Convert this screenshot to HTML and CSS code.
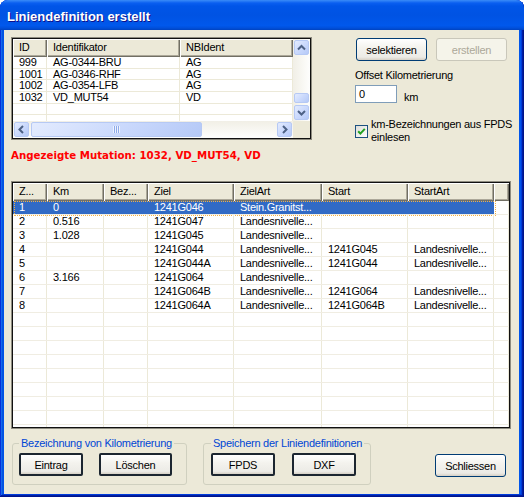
FILE: index.html
```html
<!DOCTYPE html>
<html>
<head>
<meta charset="utf-8">
<link rel="stylesheet" href="styles.css">
</head>
<body>
<div class="window">
  <div class="titlebar"><span class="title">Liniendefinition erstellt</span></div>
  <div class="client">
    <div class="top">
      <div class="frame top-list">
        <div class="frame-in">
          <div class="tl-main">
            <div class="tl-grid">
              <div class="tl-row head"><div class="h">ID</div><div class="h">Identifikator</div><div class="h">NBIdent</div></div>
              <div class="tl-row"><div class="c">999</div><div class="c">AG-0344-BRU</div><div class="c">AG</div></div>
              <div class="tl-row"><div class="c">1001</div><div class="c">AG-0346-RHF</div><div class="c">AG</div></div>
              <div class="tl-row"><div class="c">1002</div><div class="c">AG-0354-LFB</div><div class="c">AG</div></div>
              <div class="tl-row"><div class="c">1032</div><div class="c">VD_MUT54</div><div class="c">VD</div></div>
              <div class="tl-row"><div class="c"></div><div class="c"></div><div class="c"></div></div>
              <div class="tl-row"><div class="c"></div><div class="c"></div><div class="c"></div></div>
            </div>
            <div class="vscroll">
              <div class="sb"><span class="face"><svg viewBox="0 0 15 15"><path d="M4 9.5 L7.5 6 L11 9.5" /></svg></span></div>
              <div class="track"></div>
              <div class="vthumb"><span class="face"></span></div>
              <div class="sb"><span class="face"><svg viewBox="0 0 15 15"><path d="M4 6 L7.5 9.5 L11 6" /></svg></span></div>
            </div>
          </div>
          <div class="hbar-row">
            <div class="hscroll">
              <div class="sb"><span class="face"><svg viewBox="0 0 15 15"><path d="M9 4 L5.5 7.5 L9 11" /></svg></span></div>
              <div class="hthumb"><span class="face"><span class="grip"></span></span></div>
              <div class="track"></div>
              <div class="sb"><span class="face"><svg viewBox="0 0 15 15"><path d="M6 4 L9.5 7.5 L6 11" /></svg></span></div>
            </div>
            <div class="corner"></div>
          </div>
        </div>
      </div>
      <div class="side">
        <div class="btn-row">
          <button class="btn">selektieren</button>
          <button class="btn disabled">erstellen</button>
        </div>
        <div class="lbl">Offset Kilometrierung</div>
        <div class="offset-row">
          <div class="textbox">0</div>
          <span class="km">km</span>
        </div>
        <div class="check-row">
          <svg class="checkbox" width="13" height="13" viewBox="0 0 13 13">
            <defs><linearGradient id="cbg" x1="0" y1="0" x2="1" y2="1"><stop offset="0" stop-color="#dcdcd7"/><stop offset="1" stop-color="#ffffff"/></linearGradient></defs>
            <rect x="0.5" y="0.5" width="12" height="12" fill="url(#cbg)" stroke="#1c5180"/>
            <path d="M3.2 6.2 L5.4 8.6 L9.8 3.9" stroke="#21a121" stroke-width="2" fill="none"/>
          </svg>
          <span class="check-label">km-Bezeichnungen aus FPDS<br>einlesen</span>
        </div>
      </div>
    </div>

    <div class="mutation">Angezeigte Mutation: 1032, VD_MUT54, VD</div>

    <div class="frame bottom-list">
      <div class="frame-in">
        <div class="bl-row head"><div class="h">Z...</div><div class="h">Km</div><div class="h">Bez...</div><div class="h">Ziel</div><div class="h">ZielArt</div><div class="h">Start</div><div class="h">StartArt</div><div class="h"></div></div>
        <div class="bl-row sel"><div class="c">1</div><div class="c">0</div><div class="c"></div><div class="c">1241G046</div><div class="c">Stein.Granitst...</div><div class="c"></div><div class="c"></div><div class="c fill"></div></div>
        <div class="bl-row"><div class="c">2</div><div class="c">0.516</div><div class="c"></div><div class="c">1241G047</div><div class="c">Landesnivelle...</div><div class="c"></div><div class="c"></div><div class="c fill"></div></div>
        <div class="bl-row"><div class="c">3</div><div class="c">1.028</div><div class="c"></div><div class="c">1241G045</div><div class="c">Landesnivelle...</div><div class="c"></div><div class="c"></div><div class="c fill"></div></div>
        <div class="bl-row"><div class="c">4</div><div class="c"></div><div class="c"></div><div class="c">1241G044</div><div class="c">Landesnivelle...</div><div class="c">1241G045</div><div class="c">Landesnivelle...</div><div class="c fill"></div></div>
        <div class="bl-row"><div class="c">5</div><div class="c"></div><div class="c"></div><div class="c">1241G044A</div><div class="c">Landesnivelle...</div><div class="c">1241G044</div><div class="c">Landesnivelle...</div><div class="c fill"></div></div>
        <div class="bl-row"><div class="c">6</div><div class="c">3.166</div><div class="c"></div><div class="c">1241G064</div><div class="c">Landesnivelle...</div><div class="c"></div><div class="c"></div><div class="c fill"></div></div>
        <div class="bl-row"><div class="c">7</div><div class="c"></div><div class="c"></div><div class="c">1241G064B</div><div class="c">Landesnivelle...</div><div class="c">1241G064</div><div class="c">Landesnivelle...</div><div class="c fill"></div></div>
        <div class="bl-row"><div class="c">8</div><div class="c"></div><div class="c"></div><div class="c">1241G064A</div><div class="c">Landesnivelle...</div><div class="c">1241G064B</div><div class="c">Landesnivelle...</div><div class="c fill"></div></div>
        <div class="bl-row"><div class="c"></div><div class="c"></div><div class="c"></div><div class="c"></div><div class="c"></div><div class="c"></div><div class="c"></div><div class="c fill"></div></div>
        <div class="bl-row"><div class="c"></div><div class="c"></div><div class="c"></div><div class="c"></div><div class="c"></div><div class="c"></div><div class="c"></div><div class="c fill"></div></div>
        <div class="bl-row"><div class="c"></div><div class="c"></div><div class="c"></div><div class="c"></div><div class="c"></div><div class="c"></div><div class="c"></div><div class="c fill"></div></div>
        <div class="bl-row"><div class="c"></div><div class="c"></div><div class="c"></div><div class="c"></div><div class="c"></div><div class="c"></div><div class="c"></div><div class="c fill"></div></div>
        <div class="bl-row"><div class="c"></div><div class="c"></div><div class="c"></div><div class="c"></div><div class="c"></div><div class="c"></div><div class="c"></div><div class="c fill"></div></div>
        <div class="bl-row"><div class="c"></div><div class="c"></div><div class="c"></div><div class="c"></div><div class="c"></div><div class="c"></div><div class="c"></div><div class="c fill"></div></div>
        <div class="bl-row"><div class="c"></div><div class="c"></div><div class="c"></div><div class="c"></div><div class="c"></div><div class="c"></div><div class="c"></div><div class="c fill"></div></div>
        <div class="bl-row"><div class="c"></div><div class="c"></div><div class="c"></div><div class="c"></div><div class="c"></div><div class="c"></div><div class="c"></div><div class="c fill"></div></div>
        <div class="bl-row"><div class="c"></div><div class="c"></div><div class="c"></div><div class="c"></div><div class="c"></div><div class="c"></div><div class="c"></div><div class="c fill"></div></div>
      </div>
    </div>

    <div class="bottom">
      <fieldset class="grp grp1">
        <legend>Bezeichnung von Kilometrierung</legend>
        <button class="btn dark w64">Eintrag</button>
        <button class="btn dark w73">Löschen</button>
      </fieldset>
      <fieldset class="grp grp2">
        <legend>Speichern der Liniendefinitionen</legend>
        <button class="btn dark w64">FPDS</button>
        <button class="btn dark w64">DXF</button>
      </fieldset>
      <button class="btn close">Schliessen</button>
    </div>
  </div>
</div>
</body>
</html>
```

FILE: styles.css
```css
* { box-sizing: border-box; }
html, body { margin: 0; padding: 0; }
body {
  width: 524px;
  height: 497px;
  overflow: hidden;
  background: #ffffff;
  font-family: "Liberation Sans", Arial, sans-serif;
  font-size: 11px;
  letter-spacing: -0.25px;
  color: #000;
}

.window {
  width: 524px;
  height: 497px;
  display: flex;
  flex-direction: column;
  border-radius: 8px 8px 0 0;
  background: #0055ea;
  box-shadow: inset -1px -1px #00138c, inset 1px 1px #0831d9, inset -2px -2px #001ea0, inset 2px 2px #166aee, inset -3px -3px #003bda, inset 3px 3px #0855dd;
}

.titlebar {
  flex: none;
  height: 30px;
  border-radius: 8px 8px 0 0;
  background: linear-gradient(180deg, #3a8cf8 0, #0a5ff0 3px, #0055e8 6px, #0053e3 50%, #0058ec 85%, #0050dc 93%, #0043c0 100%);
  display: flex;
  align-items: center;
  padding: 3px 0 0 7px;
}
.title {
  font-weight: bold;
  font-size: 13px;
  letter-spacing: 0;
  color: #fff;
  text-shadow: 1px 1px #0f1089;
}

.client {
  flex: 1;
  margin: 0 5px 3px 4px;
  background: #ece9d8;
  padding: 7px 8px 0 7px;
  display: flex;
  flex-direction: column;
}

.top { display: flex; height: 103px; flex: none; }

.frame { border: 1px solid #8e8c80; flex: none; }
.frame-in {
  border: 1px solid #111;
  height: 100%;
  background: #fff;
  overflow: hidden;
  display: flex;
  flex-direction: column;
}

.top-list { width: 301px; height: 103px; }
.tl-main { display: flex; height: 82px; flex: none; }
.tl-grid { flex: 1; overflow: hidden; }

.tl-row {
  display: grid;
  grid-template-columns: 34px 133px 1fr;
  height: 11.67px;
  border-bottom: 1px solid #ece9d8;
  line-height: 10.67px;
}
.tl-row.head, .bl-row.head {
  height: 18px;
  line-height: 17px;
  border-bottom: 0;
}
.h {
  background: #ece9d8;
  padding-left: 6px;
  white-space: nowrap;
  overflow: hidden;
  box-shadow: inset 1px 1px #fff, inset -1px -1px #716f64, inset -2px -2px #aca899;
}
.c {
  padding-left: 6px;
  white-space: nowrap;
  overflow: hidden;
  border-right: 1px solid #ece9d8;
}

.vscroll {
  width: 17px;
  flex: none;
  display: flex;
  flex-direction: column;
  background: linear-gradient(to right, #f1efe6, #fefefd);
}
.hbar-row { display: flex; height: 17px; flex: none; }
.hscroll {
  flex: 1;
  display: flex;
  background: linear-gradient(to bottom, #f1efe6, #fefefd);
}
.corner { width: 17px; background: #ece9d8; }
.track { flex: 1; }

.sb { width: 17px; height: 17px; padding: 1px; flex: none; }
.face {
  display: flex;
  align-items: center;
  justify-content: center;
  width: 100%;
  height: 100%;
  border-radius: 2px;
  border: 1px solid #b6c9f4;
  background: linear-gradient(135deg, #e3ebfe 0%, #c9d8fc 55%, #b5c9f7 100%);
}
.sb svg { width: 15px; height: 15px; display: block; flex: none; margin: -1px; }
.sb path { stroke: #4d6185; stroke-width: 2; fill: none; }

.vthumb { height: 12px; padding: 1px; flex: none; }
.hthumb { width: 173px; padding: 1px; flex: none; }
.grip {
  width: 7px;
  height: 7px;
  background: repeating-linear-gradient(to right, #eef3fe 0 1px, #8fabea 1px 2px);
}

.side {
  flex: 1;
  margin-left: 43px;
  display: flex;
  flex-direction: column;
}
.btn-row { display: flex; gap: 9px; margin: 1px 0 0 1px; }

button { font: inherit; letter-spacing: inherit; color: inherit; margin: 0; }
.btn {
  width: 71px;
  height: 23px;
  padding: 0;
  border: 1px solid #003c74;
  border-radius: 3px;
  background: linear-gradient(180deg, #ffffff 0%, #f4f3ee 40%, #ecebe6 86%, #d6d0c5 100%);
  flex: none;
}
.btn.disabled {
  border-color: #c9c7ba;
  background: #f5f4ea;
  color: #aca899;
}
.btn.dark {
  border: 2px solid #1c2630;
  border-radius: 2px;
}
.w64 { width: 64px; }
.w73 { width: 73px; }

.lbl { margin-top: 8px; line-height: 13px; }
.offset-row { display: flex; align-items: center; margin-top: 3px; }
.textbox {
  width: 42px;
  height: 18px;
  border: 1px solid #7f9db9;
  background: #fff;
  padding-left: 3px;
  line-height: 16px;
}
.km { margin-left: 7px; margin-top: 5px; }
.check-row { display: flex; align-items: center; gap: 3px; margin-top: 15px; }
.checkbox { display: block; flex: none; }
.check-label { line-height: 13px; white-space: nowrap; }

.mutation {
  margin-top: 8px;
  line-height: 14px;
  font-family: "DejaVu Sans", sans-serif;
  font-weight: bold;
  font-size: 10.25px;
  letter-spacing: 0;
  color: #ff0000;
  flex: none;
}

.bottom-list { width: 500px; height: 248px; margin-top: 19px; }
.bl-row {
  display: grid;
  grid-template-columns: 34px 57px 44px 86px 88px 86px 86px 1fr;
  height: 14px;
  line-height: 13px;
  border-bottom: 1px solid #f0ede2;
  flex: none;
  position: relative;
}
.bl-row.sel .c:not(.fill) {
  background: #316ac5;
  color: #fff;
  border-right-color: #316ac5;
}
.bl-row.sel::after {
  content: "";
  position: absolute;
  left: 1px;
  top: 0;
  width: 480px;
  height: 13px;
  border: 1px dotted #f2b046;
}

.bottom { display: flex; align-items: flex-start; margin-top: 8px; flex: none; }
.grp {
  margin: 0;
  border: 1px solid #d0d0bf;
  border-radius: 3px;
  padding: 3px 0 8px 6px;
  display: flex;
  min-width: 0;
}
.grp legend {
  padding: 0 2px;
  line-height: 13px;
  color: #0046d5;
}
.grp1 { margin-left: 1px; width: 175px; gap: 16px; }
.grp2 { margin-left: 16px; width: 168px; gap: 17px; padding-left: 7px; }
.btn.close { margin-left: auto; margin-top: 17px; margin-right: 5px; }
```
